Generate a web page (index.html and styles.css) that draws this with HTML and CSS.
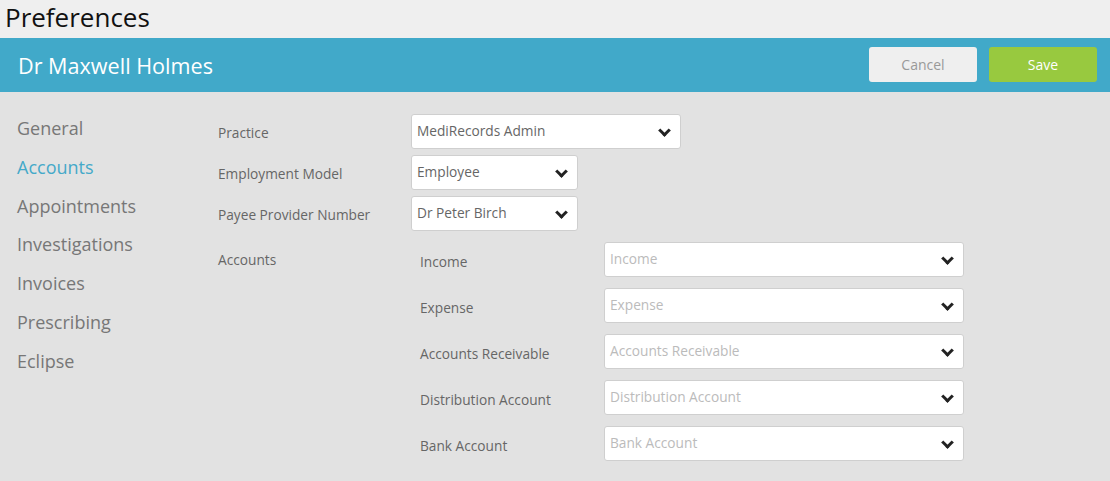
FILE: index.html
```html
<!DOCTYPE html>
<html lang="en">

<head>
    <meta charset="UTF-8">
    <title>Preferences</title>
    <link rel="stylesheet" href="styles.css">
</head>

<body>
    <div class="page-title">Preferences</div>

    <div class="header">
        <h2>Dr Maxwell Holmes</h2>
        <div class="actions">
            <button class="btn btn-cancel">Cancel</button>
            <button class="btn btn-save">Save</button>
        </div>
    </div>

    <div class="main">
        <ul class="side-nav">
            <li>General</li>
            <li class="active">Accounts</li>
            <li>Appointments</li>
            <li>Investigations</li>
            <li>Invoices</li>
            <li>Prescribing</li>
            <li>Eclipse</li>
        </ul>

        <div class="form">
            <div class="row">
                <label>Practice</label>
                <div class="select wide">MediRecords Admin<span class="chev"></span></div>
            </div>
            <div class="row">
                <label>Employment Model</label>
                <div class="select">Employee<span class="chev"></span></div>
            </div>
            <div class="row">
                <label>Payee Provider Number</label>
                <div class="select">Dr Peter Birch<span class="chev"></span></div>
            </div>

            <div class="accounts">
                <label>Accounts</label>
                <div class="sub-rows">
                    <div class="sub-row">
                        <label>Income</label>
                        <div class="select long placeholder">Income<span class="chev"></span></div>
                    </div>
                    <div class="sub-row">
                        <label>Expense</label>
                        <div class="select long placeholder">Expense<span class="chev"></span></div>
                    </div>
                    <div class="sub-row">
                        <label>Accounts Receivable</label>
                        <div class="select long placeholder">Accounts Receivable<span class="chev"></span></div>
                    </div>
                    <div class="sub-row">
                        <label>Distribution Account</label>
                        <div class="select long placeholder">Distribution Account<span class="chev"></span></div>
                    </div>
                    <div class="sub-row">
                        <label>Bank Account</label>
                        <div class="select long placeholder">Bank Account<span class="chev"></span></div>
                    </div>
                </div>
            </div>
        </div>
    </div>
</body>

</html>
```

FILE: styles.css
```css
body {
    margin: 0;
    font-family: 'Open Sans', sans-serif;
    background: #e2e2e2;
    height: 481px;
    overflow: hidden;
}

.page-title {
    background: #efefef;
    height: 38px;
    font-size: 26px;
    line-height: 35px;
    padding-left: 5px;
    color: #111;
}

.header {
    background: #41a9c9;
    height: 54px;
    display: flex;
    justify-content: space-between;
    align-items: center;
    padding: 0 13px 0 18px;
}

.header h2 {
    margin: 0;
    font-size: 21.6px;
    font-weight: normal;
    color: white;
}

.actions {
    display: flex;
    gap: 12px;
}

.btn {
    width: 108px;
    height: 35px;
    margin-top: -1px;
    border: none;
    border-radius: 3px;
    font-family: 'Open Sans', sans-serif;
    font-size: 14px;
}

.btn-cancel {
    background: #efefef;
    color: #999;
}

.btn-save {
    background: #98c93f;
    color: white;
}

.main {
    display: flex;
    padding-top: 17px;
}

.side-nav {
    list-style: none;
    margin: 0;
    padding: 0 0 0 17px;
    width: 201px;
}

.side-nav li {
    font-size: 18px;
    color: #777;
    height: 38.8px;
    line-height: 38.8px;
}

.side-nav li.active {
    color: #45a9c9;
}

.form {
    padding-top: 5px;
}

.form label {
    font-size: 13.7px;
    color: #666;
}

.row {
    display: flex;
    align-items: center;
    height: 35px;
    margin-bottom: 6px;
}

.row label {
    width: 193px;
    padding-top: 1px;
}

.select {
    position: relative;
    box-sizing: border-box;
    width: 167px;
    height: 35px;
    background: white;
    border: 1px solid #cfcfcf;
    border-radius: 3px;
    font-size: 13.7px;
    color: #666;
    padding: 6px 30px 0 5px;
}

.select.wide {
    width: 270px;
}

.select.long {
    width: 360px;
}

.select.placeholder {
    color: #bbb;
}

.chev {
    position: absolute;
    right: 11px;
    top: 11px;
    width: 6px;
    height: 6px;
    border-right: 3px solid #222;
    border-bottom: 3px solid #222;
    transform: rotate(45deg);
}

.accounts {
    display: flex;
    margin-top: 11px;
}

.accounts > label {
    width: 202px;
    padding-top: 8px;
}

.sub-row {
    display: flex;
    align-items: center;
    height: 35px;
    margin-bottom: 11px;
}

.sub-row label {
    width: 184px;
    padding-top: 3px;
}
```
